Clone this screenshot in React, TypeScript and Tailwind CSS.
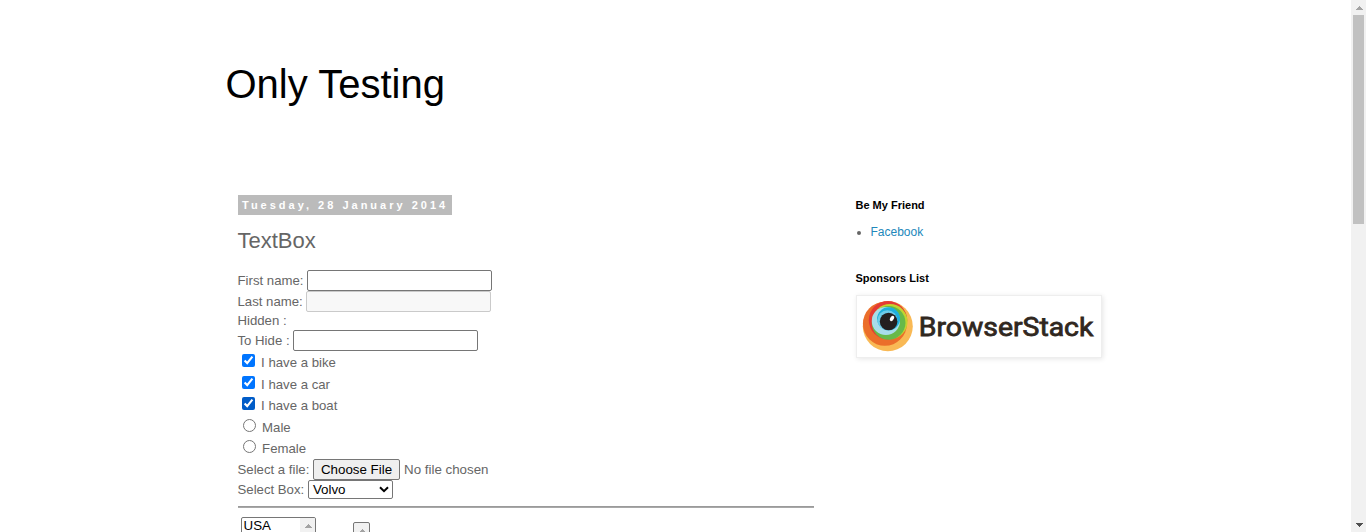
import React from 'react';

function TextRow({ label, disabled = false }: { label: string; disabled?: boolean }) {
  return (
    <div className="flex h-[21px] items-center">
      <label className="flex h-full items-center whitespace-pre">
        {label}
        <span className="w-[3.7px]" />
        <input
          type="text"
          disabled={disabled}
          className={
            disabled
              ? 'h-[21px] w-[185px] rounded-[2px] border border-[#cacaca] bg-[#f8f8f8] px-[2px]'
              : 'h-[21px] w-[185px] rounded-[2px] border border-[#767676] bg-white px-[2px]'
          }
        />
      </label>
    </div>
  );
}

function CheckRow({ label, className, accent }: { label: string; className: string; accent: string }) {
  return (
    <label className={`flex items-start pl-[4px] ${className}`}>
      <input type="checkbox" defaultChecked className={`mt-[2px] h-[13px] w-[13px] ${accent}`} />
      <span className="ml-[6.6px] mt-[1px] leading-[19px]">{label}</span>
    </label>
  );
}

function RadioRow({ label, className }: { label: string; className: string }) {
  return (
    <label className={`flex items-start pl-[5px] ${className}`}>
      <input type="radio" name="gender" className="mt-[2px] h-[13px] w-[13px]" />
      <span className="ml-[6.6px] mt-[1px] leading-[19px]">{label}</span>
    </label>
  );
}

function BrowserStackLogo() {
  return (
    <svg width="237" height="54" viewBox="0 0 237 54" aria-label="BrowserStack">
      <circle cx="26.8" cy="26.2" r="25" fill="#f9b955" />
      <circle cx="23.9" cy="23.8" r="22" fill="#eb6e2a" />
      <circle cx="27" cy="20.2" r="19.2" fill="#e43a35" />
      <circle cx="29" cy="21.6" r="17.6" fill="#c3d32f" />
      <circle cx="27.6" cy="22.8" r="16.9" fill="#67b949" />
      <circle cx="24.9" cy="21" r="14.1" fill="#a8dcea" />
      <circle cx="27.6" cy="18.8" r="11.5" fill="#1fafdc" />
      <circle cx="26.4" cy="20.3" r="10" fill="#6ccbe9" />
      <circle cx="27.6" cy="21.5" r="8.8" fill="#231f20" />
      <ellipse cx="31" cy="18.4" rx="1.8" ry="2.9" transform="rotate(30 31 18.4)" fill="#fff" />
      <text
        x="57.8"
        y="35.6"
        textLength="174.5"
        lengthAdjust="spacingAndGlyphs"
        fill="#302720"
        stroke="#302720"
        strokeWidth="0.8"
        className="font-['Roboto',sans-serif] text-[26px] font-normal"
      >
        BrowserStack
      </text>
    </svg>
  );
}

function Arrow({ down = false, color }: { down?: boolean; color: string }) {
  return (
    <svg width="8" height="4" viewBox="0 0 8 4" shapeRendering="crispEdges" className="block">
      <path d={down ? 'M0 0H8L4 4Z' : 'M0 4H8L4 0Z'} fill={color} />
    </svg>
  );
}

function Scrollbar() {
  return (
    <div className="flex w-[15px] shrink-0 flex-col items-center bg-[#f1f1f1]">
      <div className="flex h-[15px] items-center pt-px">
        <Arrow color="#a3a3a3" />
      </div>
      <div className="h-[209px] w-[11px] bg-[#c1c1c1]" />
      <div className="mt-auto flex h-[15px] items-center">
        <Arrow down color="#505050" />
      </div>
    </div>
  );
}

export default function App() {
  return (
    <div className="flex h-[532px] w-full overflow-hidden bg-white font-['Liberation_Sans',Arial,sans-serif] text-[13.2px] text-[#666666]">
      <div className="flex-1 overflow-hidden">
        <header className="h-[195px] pl-[225.5px] pt-[60px]">
          <h1 className="text-[40px] leading-[48px] text-black">Only Testing</h1>
        </header>
        <div className="flex pl-[237.5px]">
          <main className="w-[576.5px]">
            <h2 className="flex h-[20px] w-[214.5px] items-center whitespace-nowrap bg-[#bbbbbb] pl-[4.5px] text-[11px] font-bold tracking-[3px] text-white">
              Tuesday, 28 January 2014
            </h2>
            <h3 className="mt-[12px] h-[43px] text-[22px] leading-[28px]">TextBox</h3>
            <TextRow label="First name:" />
            <TextRow label="Last name:" disabled />
            <div className="h-[18px] leading-[18px]">Hidden :</div>
            <TextRow label="To Hide :" />
            <CheckRow label="I have a bike" className="mt-[1px] h-[22px]" accent="accent-[#0075ff]" />
            <CheckRow label="I have a car" className="h-[21px]" accent="accent-[#0075ff]" />
            <CheckRow label="I have a boat" className="h-[22px]" accent="accent-[#005cc8]" />
            <RadioRow label="Male" className="h-[21px]" />
            <RadioRow label="Female" className="h-[21px]" />
            <div className="flex h-[21px] items-center">
              Select a file:
              <button className="ml-[3.7px] h-[21px] w-[87px] rounded-[2px] border border-[#767676] bg-[#efefef] text-[13.33px] leading-[19px] text-black">
                Choose File
              </button>
              <span className="ml-[4px] text-[13.33px]">No file chosen</span>
            </div>
            <div className="flex h-[19px] items-center">
              Select Box:
              <div className="ml-[3.7px] flex h-[19px] w-[85px] items-center justify-between rounded-[2px] border border-[#767676] bg-white pl-[4px] pr-[3px] text-[13.33px] text-black">
                Volvo
                <svg width="10" height="7" viewBox="0 0 10 7">
                  <path d="M1 1.2L5 5.2L9 1.2" fill="none" stroke="#000" strokeWidth="2" />
                </svg>
              </div>
            </div>
            <hr className="mt-[7px] h-[2px] border-t border-b border-t-[#9a9a9a] border-b-[#a8a8a8]" />
            <div className="flex items-start pl-[3.5px] pt-[9px]">
              <div className="flex h-[70px] w-[75px] justify-between overflow-hidden rounded-[2px] border border-[#767676] bg-white text-[13.33px] leading-[15px] text-black">
                <span className="pl-[1.5px]">USA</span>
                <div className="flex w-[15px] justify-center bg-[#f1f1f1] pt-[6px]">
                  <Arrow color="#a3a3a3" />
                </div>
              </div>
              <div className="ml-[37px] mt-[5px] flex h-[60px] w-[17px] justify-center rounded-[2px] border border-[#767676] bg-[#f1f1f1] pt-[6px]">
                <Arrow color="#a3a3a3" />
              </div>
            </div>
          </main>
          <aside className="ml-[41.5px] w-[260px]">
            <h2 className="h-[20px] text-[11px] font-bold leading-[20px] text-black">Be My Friend</h2>
            <ul className="mt-[9px] h-[44px] text-[12px] leading-[16px]">
              <li className="flex items-center">
                <span className="ml-[1.5px] mt-[2px] h-[4px] w-[4px] rounded-full bg-[#666666]" />
                <a href="#" className="ml-[9.5px] text-[#2288bb]">Facebook</a>
              </li>
            </ul>
            <h2 className="h-[20px] text-[11px] font-bold leading-[20px] text-black">Sponsors List</h2>
            <div className="mt-[7px] h-[63px] w-[246.5px] border border-[#eeeeee] bg-white pl-[4.5px] pt-[4px] shadow-[1px_1px_5px_rgba(0,0,0,0.1)]">
              <BrowserStackLogo />
            </div>
          </aside>
        </div>
      </div>
      <Scrollbar />
    </div>
  );
}
